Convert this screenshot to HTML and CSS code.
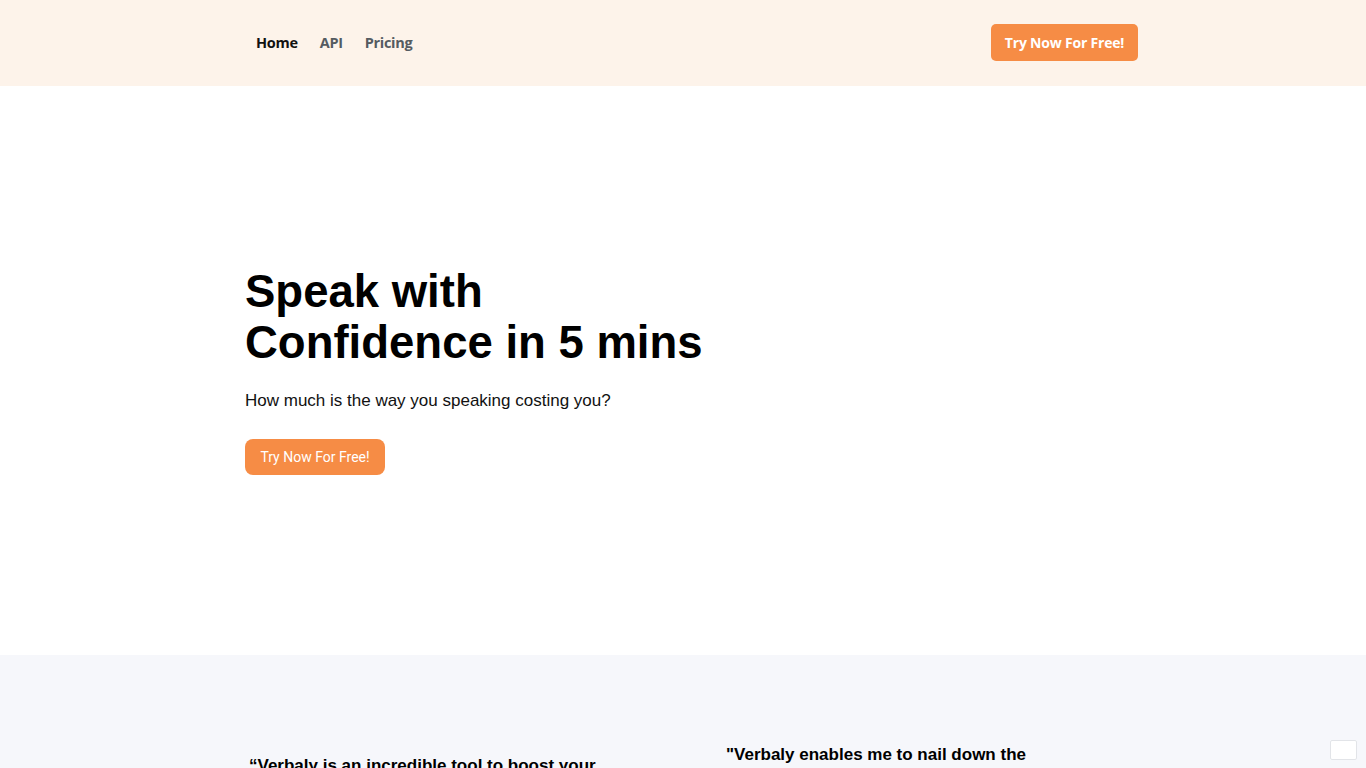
FILE: index.html
```html
<!DOCTYPE html>
<html lang="en">
<head>
<meta charset="utf-8">
<title>Verbaly</title>
<link rel="stylesheet" href="styles.css">
</head>
<body>
<header class="topbar">
  <nav class="nav">
    <a class="nav-link active" href="#">Home</a>
    <a class="nav-link" href="#">API</a>
    <a class="nav-link" href="#">Pricing</a>
  </nav>
  <a class="btn-top" href="#">Try Now For Free!</a>
</header>
<main>
  <section class="hero">
    <div class="hero-inner">
      <h1 class="hero-title">Speak with<br>Confidence in 5 mins</h1>
      <p class="hero-sub">How much is the way you speaking costing you?</p>
      <a class="btn-hero" href="#">Try Now For Free!</a>
    </div>
  </section>
  <section class="testimonials">
    <div class="quote quote-left">“Verbaly is an incredible tool to boost your communication skills"</div>
    <div class="quote quote-right">"Verbaly enables me to nail down the message every time"</div>
  </section>
</main>
<div class="widget"></div>
</body>
</html>
```
FILE: styles.css
```css
* { box-sizing: border-box; }
html, body { margin: 0; padding: 0; }
body {
  font-family: "Liberation Sans", Arial, sans-serif;
  color: #000;
  background: #fff;
  overflow: hidden;
  height: 768px;
}
a { text-decoration: none; }

.topbar {
  height: 86px;
  background: #fdf3ea;
  display: flex;
  align-items: center;
  justify-content: space-between;
  padding: 0 228px 2px 256px;
}
.nav {
  display: flex;
  gap: 22px;
}
.nav-link {
  font-family: "Open Sans", sans-serif;
  font-weight: 700;
  font-size: 14.5px;
  color: #555b61;
  letter-spacing: -0.3px;
}
.nav-link.active { color: #111; }

.btn-top {
  display: inline-flex;
  align-items: center;
  justify-content: center;
  width: 147px;
  height: 37px;
  background: #f68c45;
  color: #fff;
  border-radius: 5px;
  font-family: "Open Sans", sans-serif;
  font-weight: 700;
  font-size: 14px;
  letter-spacing: -0.2px;
}

.hero {
  height: 569px;
  display: flex;
  align-items: center;
  padding-left: 245px;
}
.hero-title {
  margin: 0;
  font-size: 45.5px;
  line-height: 51px;
  font-weight: 700;
  color: #000;
}
.hero-sub {
  margin: 21px 0 0;
  font-size: 17px;
  line-height: 24px;
  color: #111;
}
.btn-hero {
  display: inline-flex;
  align-items: center;
  justify-content: center;
  margin-top: 26px;
  width: 140px;
  height: 36px;
  background: #f68c45;
  color: #fff;
  border-radius: 8px;
  font-family: Roboto, sans-serif;
  font-size: 14px;
}

.testimonials {
  background: #f6f7fb;
  height: 113px;
  overflow: hidden;
  display: grid;
  grid-template-columns: 477px 440px;
  padding-left: 249px;
  align-items: start;
}
.quote {
  font-size: 17px;
  line-height: 24px;
  font-weight: 700;
  color: #000;
}
.quote-left { margin-top: 99px; max-width: 370px; }
.quote-right { margin-top: 88px; max-width: 320px; }

.widget {
  position: fixed;
  right: 9px;
  bottom: 8px;
  width: 27px;
  height: 20px;
  background: #fff;
  border: 1px solid #e2e4e8;
  border-radius: 2px;
}
```
